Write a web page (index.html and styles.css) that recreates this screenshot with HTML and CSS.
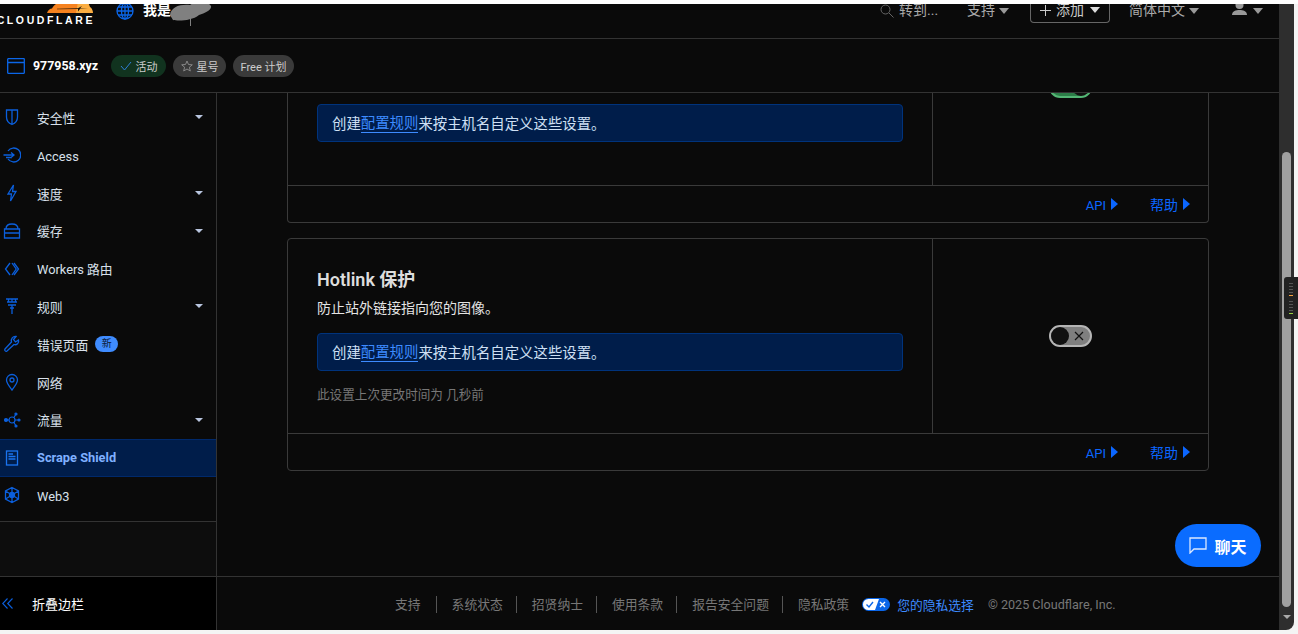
FILE: index.html
```html
<!DOCTYPE html>
<html lang="zh-CN">
<head>
    <meta charset="UTF-8">
    <meta name="viewport" content="width=device-width, initial-scale=1.0">
    <title>Scrape Shield</title>
    <link rel="stylesheet" href="styles.css">
</head>
<body>
    <div class="top-strip"></div>
    <div class="app">
        <div class="main-col">
            <header class="header">
                <div class="logo">
                    <svg class="logo-cloud" viewBox="0 0 46 9" width="46" height="9">
                        <path d="M0 9 C1 6 3 4.500 5 4.500 C7 1 10 -2 16 -2 L31 -2 L31 9 Z" fill="#f6821f"/>
                        <path d="M31 -2 L41 -2 L43 3 C45 4 46 7 46 9 L29 9 Z" fill="#fbad41"/>
                        <path d="M10 4.700 L31 4.300 L35 2 L33 4.400 L41 4.400 L33 5 L31 7.500 L31 5 L10 5.300 Z" fill="#1a1208"/>
                    </svg>
                    <div class="logo-text">CLOUDFLARE</div>
                </div>
                <svg class="globe" viewBox="0 0 18 18" width="18" height="18" fill="none" stroke="#0b66e8" stroke-width="1.300">
                    <circle cx="9" cy="9" r="8"/>
                    <ellipse cx="9" cy="9" rx="3.500" ry="8"/>
                    <path d="M9 1 V17 M1 9 H17 M2 5 H16 M2 13 H16"/>
                </svg>
                <span class="account">我是</span>
                <svg class="scribble" viewBox="0 0 42 24" width="42" height="24">
                    <path d="M0 13 C1 5 10 2 20 3 C27 -2 38 -1 41 4 C42 8 35 11 29 13 C22 19 8 19 3 18 Z" fill="#808080"/>
                    <rect x="20" y="15" width="1" height="9" fill="#808080"/>
                </svg>
                <div class="header-right">
                    <div class="search">
                        <svg viewBox="0 0 14 14" width="14" height="14" fill="none" stroke="#666" stroke-width="1">
                            <circle cx="5.500" cy="5.500" r="4.500"/>
                            <path d="M9 9 L13.500 13.500"/>
                        </svg>
                        <span>转到...</span>
                    </div>
                    <div class="head-item support">支持<i class="caret-big"></i></div>
                    <div class="add-btn">
                        <svg viewBox="0 0 11 11" width="11" height="11" stroke="#ccc" stroke-width="1"><path d="M5.500 0 V11 M0 5.500 H11"/></svg>
                        <span>添加</span><i class="caret-big caret-light"></i>
                    </div>
                    <div class="head-item lang">简体中文<i class="caret-big"></i></div>
                    <div class="head-item user">
                        <svg viewBox="0 0 15 15" width="15" height="15" fill="#999">
                            <circle cx="7.500" cy="4" r="4"/>
                            <path d="M0 14 C0 10 4 9 7.500 9 C11 9 15 10 15 14 Z"/>
                        </svg>
                        <i class="caret-big"></i>
                    </div>
                </div>
            </header>

            <div class="subheader">
                <svg class="site-icon" viewBox="0 0 18 16" width="18" height="16" fill="none" stroke="#0b66e8" stroke-width="1.300">
                    <rect x="0.700" y="0.700" width="16.600" height="14.600" rx="0.500"/>
                    <path d="M1 4.500 H17"/>
                </svg>
                <span class="site-name">977958.xyz</span>
                <span class="pill pill-green">
                    <svg viewBox="0 0 12 10" width="12" height="10" fill="none" stroke="#2f7fd6" stroke-width="1"><path d="M1 5 L4.500 9 L11 1"/></svg>
                    活动
                </span>
                <span class="pill pill-star">
                    <svg viewBox="0 0 12 12" width="12" height="12" fill="none" stroke="#888" stroke-width="1"><path d="M6 1 L7.500 4.500 L11.300 4.800 L8.400 7.200 L9.300 11 L6 9 L2.700 11 L3.600 7.200 L0.700 4.800 L4.500 4.500 Z"/></svg>
                    星号
                </span>
                <span class="pill pill-plan">Free 计划</span>
            </div>

            <div class="body">
                <aside class="sidebar">
                    <nav class="nav">
                        <a class="nav-item">
                            <svg viewBox="0 0 18 18" width="18" height="18" fill="none" stroke="#0b5fdc" stroke-width="1.300"><path d="M3.500 2 H14.500 V9 C14.500 13 11.500 15.500 9 16.500 C6.500 15.500 3.500 13 3.500 9 Z M9 2 V16"/></svg>
                            <span>安全性</span><i class="caret"></i>
                        </a>
                        <a class="nav-item">
                            <svg viewBox="0 0 18 18" width="18" height="18" fill="none" stroke="#0b5fdc" stroke-width="1.300"><path d="M5 5 A7 7 0 1 1 5 13 M0.500 9 H11 M8 6.500 L11 9 L8 11.500 M3 11.500 H9"/></svg>
                            <span class="nav-latin">Access</span>
                        </a>
                        <a class="nav-item">
                            <svg viewBox="0 0 18 18" width="18" height="18" fill="none" stroke="#0b5fdc" stroke-width="1.300"><path d="M10.500 1 L5 10 H8.500 L7.500 17 L13 7.500 H9.500 Z"/></svg>
                            <span>速度</span><i class="caret"></i>
                        </a>
                        <a class="nav-item">
                            <svg viewBox="0 0 18 18" width="18" height="18" fill="none" stroke="#0b5fdc" stroke-width="1.300"><path d="M3 7 C3 3 5 2 9 2 C13 2 15 3 15 7 M1.500 7 H16.500 V11 H1.500 Z M1.500 11 H16.500 V16 H1.500 Z"/></svg>
                            <span>缓存</span><i class="caret"></i>
                        </a>
                        <a class="nav-item">
                            <svg viewBox="0 0 18 18" width="18" height="18" fill="none" stroke="#0b5fdc" stroke-width="1.300"><path d="M7 3 L2.500 9 L7 15 M11 3 L15.500 9 L11 15 M9 3 L13.200 9 L9 15"/></svg>
                            <span>Workers 路由</span>
                        </a>
                        <a class="nav-item">
                            <svg viewBox="0 0 18 18" width="18" height="18" fill="none" stroke="#0b5fdc" stroke-width="1.300"><path d="M3 2 H15 M4 5 H14 M5.500 2 V5 M9 2 V5 M12.500 2 V5 M5 8 H13 M7 11 H11 M9 8 V17"/></svg>
                            <span>规则</span><i class="caret"></i>
                        </a>
                        <a class="nav-item">
                            <svg viewBox="0 0 18 18" width="18" height="18" fill="none" stroke="#0b5fdc" stroke-width="1.300"><path d="M13 1.500 L10.500 4.500 L12.500 7 L15.500 5 C16.500 8 13.500 10.500 11 9.500 L4 16 C2.800 17 1 15.300 2 14 L8.500 7 C7.500 4 10 1 13 1.500 Z"/></svg>
                            <span>错误页面</span><em class="badge">新</em>
                        </a>
                        <a class="nav-item">
                            <svg viewBox="0 0 18 18" width="18" height="18" fill="none" stroke="#0b5fdc" stroke-width="1.300"><path d="M9 17 C6 13 3.500 10 3.500 7 A5.500 5.500 0 0 1 14.500 7 C14.500 10 12 13 9 17 Z"/><circle cx="9" cy="7" r="2"/></svg>
                            <span>网络</span>
                        </a>
                        <a class="nav-item">
                            <svg viewBox="0 0 18 18" width="18" height="18" fill="#0b5fdc" stroke="#0b5fdc" stroke-width="1.200"><circle cx="9" cy="9" r="3" fill="none"/><circle cx="3" cy="9" r="1.500"/><circle cx="13" cy="3" r="1"/><circle cx="13" cy="15" r="1"/><circle cx="16" cy="9" r="1"/><path d="M4 9 H6 M11 6.500 L13 3 M11 11.500 L13 15 M12 9 H16" fill="none"/></svg>
                            <span>流量</span><i class="caret"></i>
                        </a>
                        <a class="nav-item nav-active">
                            <svg viewBox="0 0 18 18" width="18" height="18" fill="none" stroke="#1a74f0" stroke-width="1.300"><rect x="3.500" y="2" width="11" height="14"/><path d="M5.500 5 H10 M5.500 7.500 H12.500 M5.500 10 H12.500"/></svg>
                            <span>Scrape Shield</span>
                        </a>
                        <a class="nav-item">
                            <svg viewBox="0 0 18 18" width="18" height="18" fill="none" stroke="#0b5fdc" stroke-width="1.300"><path d="M9 1.500 L15.500 5 V13 L9 16.500 L2.500 13 V5 Z M9 1.500 V16.500 M2.500 5 L15.500 13 M15.500 5 L2.500 13"/><circle cx="9" cy="9" r="2.500" fill="#0b5fdc"/></svg>
                            <span class="nav-latin">Web3</span>
                        </a>
                    </nav>
                    <div class="side-spacer"></div>
                    <div class="collapse">
                        <svg viewBox="0 0 11 11" width="11" height="11" fill="none" stroke="#0b5fdc" stroke-width="1.100"><path d="M5.500 0.500 L0.700 5.500 L5.500 10.500 M10.500 0.500 L5.700 5.500 L10.500 10.500"/></svg>
                        <span>折叠边栏</span>
                    </div>
                </aside>

                <div class="main">
                    <div class="scroll">
                        <section class="card card-cut">
                            <div class="card-row row-cut">
                                <div class="card-left">
                                    <div class="info">创建<a class="info-link">配置规则</a>来按主机名自定义这些设置。</div>
                                </div>
                                <div class="card-right right-cut">
                                    <span class="toggle toggle-on"><i class="knob"></i></span>
                                </div>
                            </div>
                            <div class="card-foot">
                                <a class="foot-link"><span class="foot-api">API</span><i class="arrow"></i></a>
                                <a class="foot-link">帮助<i class="arrow"></i></a>
                            </div>
                        </section>

                        <section class="card">
                            <div class="card-row">
                                <div class="card-left pad-top">
                                    <h2 class="card-title">Hotlink 保护</h2>
                                    <p class="card-desc">防止站外链接指向您的图像。</p>
                                    <div class="info info-gap">创建<a class="info-link">配置规则</a>来按主机名自定义这些设置。</div>
                                    <p class="card-time">此设置上次更改时间为 几秒前</p>
                                </div>
                                <div class="card-right">
                                    <span class="toggle">
                                        <i class="knob"></i>
                                        <svg viewBox="0 0 10 10" width="10" height="10" stroke="#111" stroke-width="1.200"><path d="M1 1 L9 9 M9 1 L1 9"/></svg>
                                    </span>
                                </div>
                            </div>
                            <div class="card-foot">
                                <a class="foot-link"><span class="foot-api">API</span><i class="arrow"></i></a>
                                <a class="foot-link">帮助<i class="arrow"></i></a>
                            </div>
                        </section>
                    </div>

                    <footer class="footer">
                        <a class="foot-item">支持</a>
                        <a class="foot-item">系统状态</a>
                        <a class="foot-item">招贤纳士</a>
                        <a class="foot-item">使用条款</a>
                        <a class="foot-item">报告安全问题</a>
                        <a class="foot-item foot-last">隐私政策</a>
                        <a class="privacy">
                            <svg viewBox="0 0 28 13" width="28" height="13">
                                <rect width="28" height="13" rx="6.500" fill="#0b66e8"/>
                                <path d="M6.500 1 H17 L13 12 H6.500 A5.500 5.500 0 0 1 6.500 1 Z" fill="#fff"/>
                                <path d="M4.500 6.500 L7 9 L11 4" fill="none" stroke="#0b66e8" stroke-width="1.400"/>
                                <path d="M18 4 L23 9 M23 4 L18 9" stroke="#fff" stroke-width="1.400"/>
                            </svg>
                            您的隐私选择
                        </a>
                        <span class="copyright">© 2025 Cloudflare, Inc.</span>
                    </footer>

                    <button class="chat">
                        <svg viewBox="0 0 18 17" width="18" height="17" fill="none" stroke="#dbe8ff" stroke-width="1.300"><path d="M1 1 H17 V12 H5 L1 16 Z"/></svg>
                        聊天
                    </button>
                </div>
            </div>
        </div>

        <div class="scrollbar">
            <div class="thumb"></div>
            <i class="scroll-down"></i>
        </div>
    </div>

    <!-- little tool handle stuck on the window edge -->
    <div class="handle">
        <i></i><i></i><i></i><i></i><i class="tick-orange"></i>
        <b></b>
        <i></i><i></i><i></i><i></i><i class="tick-green"></i>
    </div>
</body>
</html>
```

FILE: styles.css
```css
* {
    box-sizing: border-box;
}
body {
    margin: 0;
    height: 634px;
    overflow: hidden;
    background-color: #f4f4f4;
    color: #ddd;
    font-family: Roboto, 'Noto Sans CJK SC', sans-serif;
    font-size: 12.800px;
}
.top-strip {
    height: 4px;
    background-color: #fff;
}
.app {
    display: flex;
    width: 1294px;
    height: 626px;
    border-bottom-right-radius: 8px;
    overflow: hidden;
}
.main-col {
    width: 1279px;
    display: flex;
    flex-direction: column;
    background-color: #0a0a0a;
}

/* header */
.header {
    height: 35px;
    flex: none;
    display: flex;
    align-items: flex-start;
    border-bottom: 1px solid #333;
    overflow: hidden;
}
.logo {
    width: 93px;
    overflow: hidden;
    display: flex;
    flex-direction: column;
    align-items: flex-end;
}
.logo-cloud {
    display: block;
    flex: none;
}
.logo-text {
    margin-top: 1px;
    font-family: 'Liberation Sans', sans-serif;
    font-size: 10.500px;
    font-weight: 700;
    line-height: 12px;
    letter-spacing: 2.600px;
    margin-right: -2px;
    color: #fff;
    white-space: nowrap;
}
.globe {
    margin: -2px 0 0 23px;
    flex: none;
}
.account {
    margin-left: 9px;
    font-size: 14px;
    font-weight: 700;
    line-height: 12px;
    color: #fff;
}
.scribble {
    margin: -2px 0 0 -1px;
}
.header-right {
    margin-left: auto;
    display: flex;
    align-items: flex-start;
    padding-right: 16px;
    font-size: 14px;
    line-height: 12px;
    color: #aaa;
    white-space: nowrap;
}
.search {
    display: flex;
    gap: 5px;
    width: 87px;
}
.head-item {
    display: flex;
    align-items: center;
    gap: 4px;
}
.support {
    width: 63px;
}
.lang {
    margin-left: 19px;
}
.user {
    margin-left: 33px;
    gap: 6px;
}
.user svg {
    margin-top: -3px;
}
.add-btn {
    width: 80px;
    height: 20px;
    margin-top: -1px;
    padding: 1px 8px 0 9px;
    display: flex;
    align-items: flex-start;
    gap: 5px;
    border: 1px solid #666;
    border-top: none;
    border-radius: 0 0 4px 4px;
    color: #ccc;
}
.add-btn svg {
    margin-top: 1px;
    flex: none;
}
.caret-big {
    width: 0;
    height: 0;
    margin-top: 1px;
    border-left: 5px solid transparent;
    border-right: 5px solid transparent;
    border-top: 6px solid #999;
}
.caret-light {
    margin: 3px 0 0 1px;
    border-top-color: #ddd;
}

/* site bar */
.subheader {
    height: 54px;
    flex: none;
    display: flex;
    align-items: center;
    padding-left: 7px;
    border-bottom: 1px solid #333;
}
.site-icon {
    flex: none;
}
.site-name {
    width: 64px;
    margin: 0 14px 0 8px;
    font-size: 12.400px;
    font-weight: 700;
    color: #fff;
}
.pill {
    height: 22px;
    margin-right: 7px;
    display: flex;
    align-items: center;
    justify-content: center;
    gap: 4px;
    border-radius: 11px;
    background-color: #3a3a3a;
    font-size: 11px;
    color: #ccc;
}
.pill-green {
    width: 55px;
    background-color: #11331f;
}
.pill-star {
    width: 53px;
}
.pill-plan {
    width: 61px;
}

/* layout under the bars */
.body {
    flex: 1;
    display: flex;
    min-height: 0;
}
.sidebar {
    width: 217px;
    flex: none;
    display: flex;
    flex-direction: column;
    border-right: 1px solid #333;
}
.nav {
    height: 429px;
    padding: 5.600px 0 0;
    border-bottom: 1px solid #333;
}
.nav-item {
    height: 37.800px;
    padding: 0 13px 0 3px;
    display: flex;
    align-items: center;
    gap: 16px;
    color: #d8e0ea;
}
.nav-item svg {
    flex: none;
}
.nav-latin {
    padding-top: 2px;
}
.nav-active {
    background-color: #001d4a;
    border-top: 1px solid #00296b;
    border-bottom: 1px solid #00296b;
    font-weight: 700;
    color: #7fb0ff;
}
.caret {
    margin-left: auto;
    width: 0;
    height: 0;
    border-left: 4px solid transparent;
    border-right: 4px solid transparent;
    border-top: 4px solid #b9c6e0;
}
.badge {
    margin-left: -9px;
    width: 23px;
    height: 16px;
    border-radius: 8px;
    background-color: #3f8cff;
    color: #0b1b38;
    font-size: 10px;
    font-style: normal;
    line-height: 16px;
    text-align: center;
}
.side-spacer {
    height: 54px;
    background-color: #0d0d0d;
}
.collapse {
    flex: 1;
    display: flex;
    align-items: center;
    gap: 19px;
    padding-left: 2px;
    border-top: 1px solid #333;
    background-color: #000;
    color: #fff;
    font-size: 13px;
}

/* cards */
.main {
    flex: 1;
    min-width: 0;
    display: flex;
    flex-direction: column;
    position: relative;
}
.scroll {
    height: 483px;
    flex: none;
    padding: 0 70px;
    overflow: hidden;
}
.card {
    margin-bottom: 15px;
    border: 1px solid #3a3a3a;
    border-radius: 4px;
}
.card-cut {
    border-top: none;
    border-radius: 0 0 4px 4px;
}
.card-row {
    height: 195px;
    display: flex;
    border-bottom: 1px solid #3a3a3a;
}
.row-cut {
    height: 93px;
}
.card-left {
    width: 645px;
    flex: none;
    padding: 11px 29px 0;
    border-right: 1px solid #3a3a3a;
}
.pad-top {
    padding-top: 30px;
}
.card-right {
    flex: 1;
    display: flex;
    align-items: center;
    justify-content: center;
}
.right-cut {
    align-items: flex-start;
}
.right-cut .toggle {
    margin-top: -17px;
}
.card-title {
    margin: 0;
    font-size: 18px;
    font-weight: 600;
    line-height: 22px;
    color: #ddd;
}
.card-desc {
    margin: 7px 0 0;
    font-size: 14px;
    line-height: 20px;
    color: #e4e4e4;
}
.info {
    height: 38px;
    padding: 0 0 2px 14px;
    display: flex;
    align-items: center;
    border: 1px solid #00337c;
    border-radius: 4px;
    background-color: #001d4a;
    font-size: 14.400px;
    color: #cfe0f5;
}
.info-gap {
    margin-top: 15px;
}
.info-link {
    color: #3d8bff;
    border-bottom: 1px solid #3d8bff;
}
.card-time {
    margin: 14px 0 0;
    font-size: 12.600px;
    line-height: 20px;
    color: #777;
}
.card-foot {
    height: 36px;
    padding-right: 18px;
    display: flex;
    align-items: center;
    justify-content: flex-end;
    gap: 32px;
}
.foot-link {
    display: flex;
    align-items: center;
    gap: 5px;
    font-size: 14px;
    color: #0b66ff;
}
.foot-api {
    padding-top: 2px;
    font-size: 13px;
}
.arrow {
    width: 0;
    height: 0;
    border-top: 6px solid transparent;
    border-bottom: 6px solid transparent;
    border-left: 7px solid #0b66ff;
}
.toggle {
    width: 43px;
    height: 22px;
    padding: 0 6px 0 2px;
    display: flex;
    align-items: center;
    justify-content: space-between;
    border: 2px solid #b5b5b5;
    border-radius: 11px;
    background-color: #7f7f7f;
}
.knob {
    width: 18px;
    height: 18px;
    margin-left: -2px;
    border-radius: 50%;
    background-color: #111;
}
.toggle-on {
    border-color: #54b675;
    background-color: #2c7d48;
    justify-content: flex-end;
    padding: 0;
}
.toggle-on .knob {
    margin: 0;
}

/* footer */
.footer {
    flex: 1;
    padding: 2px 0 0 178px;
    display: flex;
    align-items: center;
    border-top: 1px solid #333;
    color: #777;
}
.foot-item {
    padding: 0 13px 0 15px;
    line-height: 17px;
    border-right: 1px solid #555;
}
.foot-item:first-child {
    padding: 0 15px 0 0;
}
.foot-last {
    border-right: none;
}
.privacy {
    display: flex;
    align-items: center;
    gap: 7px;
    color: #3d8bff;
}
.copyright {
    margin-left: 14px;
    font-size: 12.600px;
}
.chat {
    position: absolute;
    left: 958px;
    top: 431px;
    width: 86px;
    height: 43px;
    padding: 0;
    display: flex;
    align-items: center;
    justify-content: center;
    gap: 7px;
    border: none;
    border-radius: 22px;
    background-color: #0a6cff;
    color: #fff;
    font-family: inherit;
    font-size: 16px;
    font-weight: 700;
}

/* browser scrollbar */
.scrollbar {
    width: 15px;
    flex: none;
    position: relative;
    background-color: #2e2e2e;
}
.thumb {
    position: absolute;
    left: 3px;
    top: 148px;
    width: 9px;
    height: 455px;
    border-radius: 5px;
    background-color: #a0a0a0;
}
.scroll-down {
    position: absolute;
    left: 4px;
    top: 611px;
    width: 0;
    height: 0;
    border-left: 4px solid transparent;
    border-right: 4px solid transparent;
    border-top: 4px solid #aaa;
}
.handle {
    position: absolute;
    left: 1284px;
    top: 277px;
    width: 14px;
    height: 42px;
    padding: 6px 0 0 5px;
    border-radius: 3px 0 0 3px;
    background-color: #222;
}
.handle i {
    display: block;
    width: 4px;
    height: 1px;
    margin-bottom: 2px;
    background-color: #555;
}
.handle b {
    display: block;
    height: 3px;
}
.handle .tick-orange {
    background-color: #f5a23c;
}
.handle .tick-green {
    background-color: #9ad13f;
}
```
